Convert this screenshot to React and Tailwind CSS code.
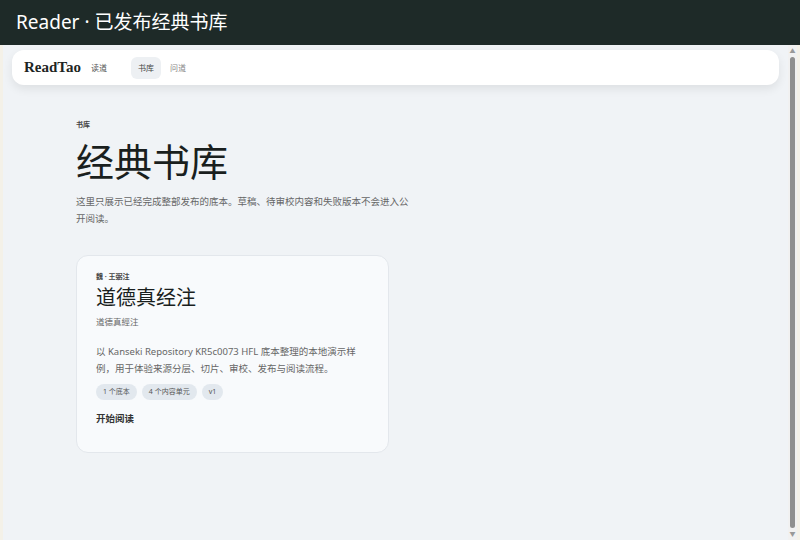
export default function App() {
  const cjk = { fontFamily: '"Noto Sans", "Noto Sans CJK SC", sans-serif' };
  return (
    <div className="w-[800px] h-[540px] flex flex-col bg-[#f4f1e8] overflow-hidden" style={cjk}>
      <div className="h-[45px] bg-[#1e2a28] flex items-center px-4 text-white text-[19px] shrink-0">Reader · 已发布经典书库</div>
      <div className="flex flex-1 min-h-0">
        <div className="w-[3px]" />
        <div className="flex-1 bg-[#f0f3f6] px-[9px] pt-[5px] flex flex-col">
          <div className="h-[35px] bg-white rounded-xl shadow-[0_4px_10px_rgba(0,0,0,0.08)] flex items-center px-3">
            <span className="text-[15px] font-bold text-[#1e2523]" style={{ fontFamily: '"Liberation Serif", serif' }}>ReadTao</span>
            <span className="text-[8px] text-[#555] ml-[10px]">读道</span>
            <span className="ml-[24px] text-[8px] text-[#444] bg-[#edf0f3] rounded-md px-[7px] py-[5px]">书库</span>
            <span className="ml-[9px] text-[8px] text-[#888]">问道</span>
          </div>
          <div className="pl-[64px] pt-[35px]">
            <div className="text-[7px] font-bold text-[#444]">书库</div>
            <div className="text-[38px] leading-[48px] text-[#1a1f1e] mt-[6px]">经典书库</div>
            <div className="text-[9.5px] leading-[17px] text-[#666] w-[335px] mt-[8px]">这里只展示已经完成整部发布的底本。草稿、待审校内容和失败版本不会进入公开阅读。</div>
            <div className="mt-[28px] w-[313px] h-[198px] bg-[#f8fafc] border border-[#e3e7ec] rounded-xl px-[19px] pt-[16px]">
              <div className="text-[7px] font-bold text-[#444]">魏 · 王弼注</div>
              <div className="text-[20px] leading-[28px] text-[#1a1f1e] mt-[2px]">道德真经注</div>
              <div className="text-[8.5px] text-[#666] mt-[4px]">道德真經注</div>
              <div className="text-[9.5px] leading-[17px] text-[#666] mt-[14px]">以 Kanseki Repository KR5c0073 HFL 底本整理的本地演示样例，用于体验来源分层、切片、审校、发布与阅读流程。</div>
              <div className="flex gap-[5px] mt-[7px]">
                {["1 个底本", "4 个内容单元", "v1"].map(t => (
                  <span key={t} className="text-[7px] text-[#555] bg-[#e2e8ee] rounded-full px-[7px] py-[3px]">{t}</span>
                ))}
              </div>
              <div className="text-[9.5px] font-bold text-[#333] mt-[12px]">开始阅读</div>
            </div>
          </div>
        </div>
        <div className="w-[9px] bg-[#f1f1f1] flex flex-col items-center py-[2px]">
          <div className="text-[6px] text-[#999] leading-[8px]">▲</div>
          <div className="w-[5px] flex-1 bg-[#8f8f8f] rounded-full my-[2px]" />
          <div className="text-[6px] text-[#999] leading-[8px]">▼</div>
        </div>
        <div className="w-[3px]" />
      </div>
    </div>
  );
}
